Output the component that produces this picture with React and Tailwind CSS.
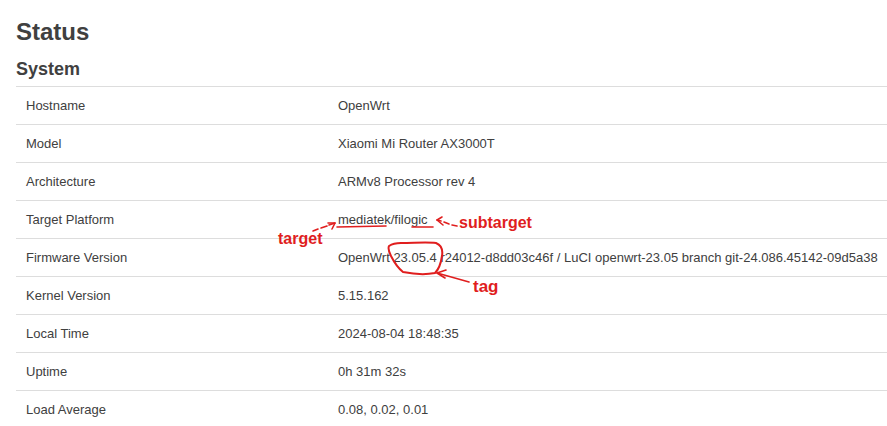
import React from 'react';

const rows = [
  ['Hostname', 'OpenWrt'],
  ['Model', 'Xiaomi Mi Router AX3000T'],
  ['Architecture', 'ARMv8 Processor rev 4'],
  ['Target Platform', 'mediatek/filogic'],
  ['Firmware Version', 'OpenWrt 23.05.4 r24012-d8dd03c46f / LuCI openwrt-23.05 branch git-24.086.45142-09d5a38'],
  ['Kernel Version', '5.15.162'],
  ['Local Time', '2024-08-04 18:48:35'],
  ['Uptime', '0h 31m 32s'],
  ['Load Average', '0.08, 0.02, 0.01'],
];

const RED = '#e01e1e';

// hand drawn red notes over the table
const Annotations = () => (
  <>
    <svg
      className="absolute left-0 top-0 pointer-events-none"
      width="887"
      height="426"
      viewBox="0 0 887 426"
      fill="none"
      stroke={RED}
      strokeWidth="1.6"
      strokeLinecap="round"
      strokeLinejoin="round"
    >
      {/* target arrow */}
      <path d="M313 231 L318 229 M321 228 L327 226 M329 225 L335 223" />
      <path d="M328 223 L335 223 L332 229" />
      {/* underlines */}
      <path d="M337 227 L386 226" />
      <path d="M412 227 L433 227" />
      {/* subtarget arrow */}
      <path d="M437 220 L441 221 M444 222 L449 224 M452 225 L457 226" />
      <path d="M442 217 L437 220 L443 225" />
      {/* tag loop */}
      <path
        strokeWidth="2"
        d="M389 246 C392 244 396 243 401 243 C414 243 427 242 436 243 C441 245 443 250 442 256 C441 263 439 269 435 273 C425 275 413 274 403 272 C398 268 394 262 391 256 C389 252 388 248 389 246 Z"
      />
      {/* tag arrow */}
      <path d="M437 273 L469 282" />
      <path d="M446 270 L437 273 L445 278" />
    </svg>
    <span className="absolute left-[278px] top-[231px] text-[16px] leading-4 font-bold text-[#e01e1e] pointer-events-none">
      target
    </span>
    <span className="absolute left-[459px] top-[215px] text-[16px] leading-4 font-bold text-[#e01e1e] pointer-events-none">
      subtarget
    </span>
    <span className="absolute left-[473px] top-[279px] text-[17px] leading-4 font-bold text-[#e01e1e] pointer-events-none">
      tag
    </span>
  </>
);

const App = () => {
  return (
    <div
      className="relative w-[887px] h-[426px] overflow-hidden bg-white pl-4 text-[#404040]"
      style={{ fontFamily: '"Liberation Sans", Arial, sans-serif' }}
    >
      <h1 className="mt-[18px] text-[24px] leading-[28px] font-bold">Status</h1>
      <h2 className="mt-3 text-[18px] leading-[22px] font-bold">System</h2>

      <div className="mt-[6px] border-t border-[#dddddd]">
        {rows.map(([label, value]) => (
          <div key={label} className="flex items-center h-[38px] border-b border-[#dddddd] text-[13px] leading-[18px]">
            <div className="w-[312px] shrink-0 pl-[10px]">{label}</div>
            <div className="pl-[10px] whitespace-nowrap">{value}</div>
          </div>
        ))}
      </div>

      <Annotations />
    </div>
  );
};

export default App;
